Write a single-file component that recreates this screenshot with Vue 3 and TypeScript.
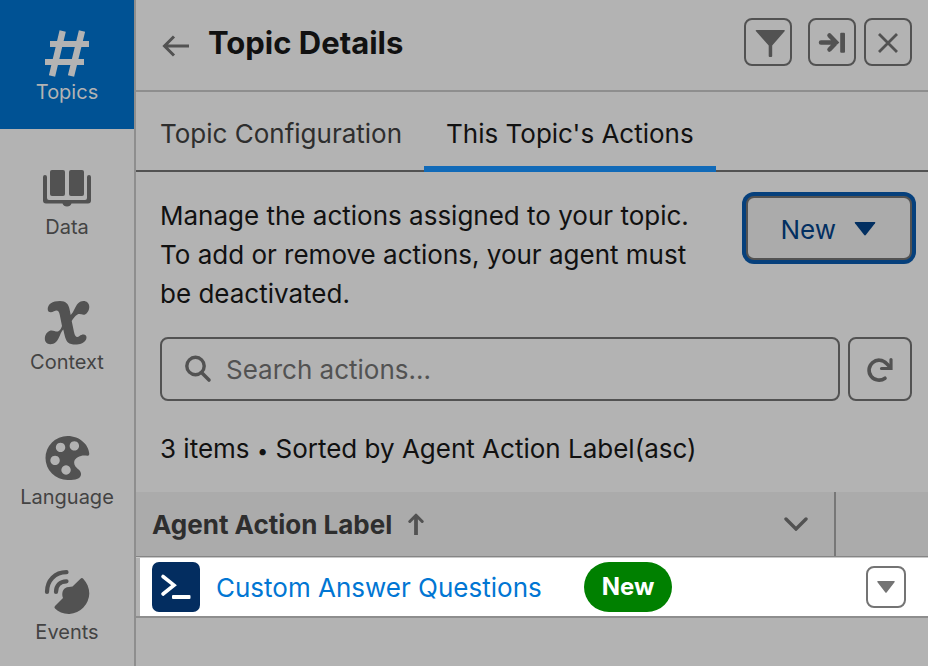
<script setup lang="ts">
import { ref } from 'vue'

interface NavItem {
  id: string
  label: string
}

const navItems: NavItem[] = [
  { id: 'topics', label: 'Topics' },
  { id: 'data', label: 'Data' },
  { id: 'context', label: 'Context' },
  { id: 'language', label: 'Language' },
  { id: 'events', label: 'Events' },
]
const tabs: string[] = ['Topic Configuration', "This Topic's Actions"]

const activeNav = ref('topics')
const activeTab = ref(1)
const query = ref('')
</script>

<template>
  <div class="app">
    <nav class="sidebar">
      <button
        v-for="item in navItems"
        :key="item.id"
        type="button"
        class="nav-item"
        :class="{ active: item.id === activeNav }"
        @click="activeNav = item.id"
      >
        <svg class="nav-icon" viewBox="0 0 48 48" aria-hidden="true">
          <g v-if="item.id === 'topics'" fill="none" stroke="currentColor" stroke-linejoin="round">
            <path d="M19.700 2L9 47M39 2L28 47" stroke-width="6.400" />
            <path d="M7 15H46M2 33H41" stroke-width="5.800" />
          </g>
          <g v-else-if="item.id === 'data'" fill="currentColor">
            <rect x="7" y="6" width="15" height="26" rx="2" />
            <rect x="26" y="6" width="15" height="26" rx="2" />
            <path d="M0 13q0-2 2-2t2 2v21q0 2 2 2h36q2 0 2-2V13q0-2 2-2t2 2v23.500q0 3-3 3H28.500q-1 3-4.500 3t-4.500-3H3q-3 0-3-3z" />
          </g>
          <path
            v-else-if="item.id === 'context'"
            fill="currentColor"
            d="M4.700 10C5 5 9 2 17 2C23 2 25.500 5 26.500 10L27.700 16C31 12.500 31.500 9 34 5.500C37 1.500 42 1 44.500 3.500C47.500 6.500 46.500 11.500 43.500 14.500C40.500 17.500 37.500 14 34.500 15.500C32 17 30 19.500 28.700 22L31 33C32 38 34 39 36.500 37C39 35 42 35 43.200 37C44.500 40 41.500 43.500 38.500 44.500C34.500 46 28 46 25 43.500C22.500 41 21.500 36 20.300 30.500C17 33.500 17 39 13 43C9.500 46.300 4 46 2.200 42C1 37.500 3 33 7.500 31.500C10.500 31 12.500 33 15 32.500C17 31.500 18.500 29 19 27L16.800 16C16 11.500 14 10.500 11 12.200C7.500 14.500 4.500 13 4.700 10Z"
          />
          <path
            v-else-if="item.id === 'language'"
            fill="currentColor"
            fill-rule="evenodd"
            d="M24.500 2C37 2 46 11 46.300 20Q46.300 22 44.500 21.800C42 21.500 40 21.300 38 22C33 23.500 31 26 31.200 29C31.500 33 35 34.500 37 37C39 40 38 43.500 34.500 44.700C31 46 27 46.200 24.500 46A22 22 0 0 1 24.500 2ZM17.500 8.700a4.700 4.700 0 1 0 .1 0zM31.300 7.200a4.700 4.700 0 1 0 .1 0zM12 21.700a4.700 4.700 0 1 0 .1 0zM23 31.300a4.700 4.700 0 1 0 .1 0z"
          />
          <g v-else fill="currentColor">
            <path
              d="M4 23C4 11.500 12 3.200 23.500 3.200M13 23C13 16.500 17 12.300 23.500 12.300"
              fill="none"
              stroke="currentColor"
              stroke-width="4.200"
              stroke-linecap="round"
            />
            <path d="M37.500 9.700q1.500-1.200 2.700.1C44 14 46.300 19 46.300 24.500A21 21 0 0 1 26.500 45C20.500 45.200 15.500 43 12 39.500q-1.200-1.300 0-2.500l8-8C18.500 25 19.500 21 22 19.200C24.500 17.600 27.500 18 29.500 17.500z" />
          </g>
        </svg>
        <span class="nav-label">{{ item.label }}</span>
      </button>
    </nav>

    <main class="panel">
      <header class="panel-header">
        <button type="button" class="back" aria-label="Back">
          <svg width="28" height="24" viewBox="0 0 28 24" fill="none" stroke="currentColor" stroke-width="3" aria-hidden="true">
            <path d="M27 12H3M12 2.500L2.500 12L12 21.500" />
          </svg>
        </button>
        <h1 class="title">Topic Details</h1>
        <button type="button" class="icon-button spaced" aria-label="Filter">
          <svg width="34" height="30" viewBox="0 0 34 30" fill="currentColor" aria-hidden="true">
            <path d="M5.500 3H33q1.500 0 .6 1.200L21.200 18.500V29q0 1-1 1h-1.500q-1 0-1-1V18.500L5 4.200Q4 3 5.500 3z" />
          </svg>
        </button>
        <button type="button" class="icon-button" aria-label="Collapse panel">
          <svg width="28" height="28" viewBox="0 0 28 28" aria-hidden="true">
            <path d="M3 14.500H18M11.500 7.500L18.200 14.500L11.500 21.500" fill="none" stroke="currentColor" stroke-width="4.500" stroke-linecap="round" />
            <rect x="22.200" y="4.800" width="4.800" height="20" rx="1" fill="currentColor" />
          </svg>
        </button>
        <button type="button" class="icon-button" aria-label="Close">
          <svg width="24" height="24" viewBox="0 0 24 24" fill="none" stroke="currentColor" stroke-width="2.800" aria-hidden="true">
            <path d="M3 4L21 22M21 4L3 22" />
          </svg>
        </button>
      </header>

      <div class="tabs" role="tablist">
        <button
          v-for="(tab, index) in tabs"
          :key="tab"
          type="button"
          role="tab"
          class="tab"
          :class="{ selected: index === activeTab }"
          :aria-selected="index === activeTab"
          @click="activeTab = index"
        >
          {{ tab }}
        </button>
      </div>

      <section class="intro">
        <p class="intro-text">
          Manage the actions assigned to your topic. To add or remove actions, your agent must be deactivated.
        </p>
        <button type="button" class="new-button">
          New
          <svg width="22" height="14" viewBox="0 0 22 14" fill="currentColor" aria-hidden="true">
            <path d="M1.500 0H20.500Q22 0 21 1.300L12 12.800Q11 14 10 12.800L1 1.300Q0 0 1.500 0z" />
          </svg>
        </button>
      </section>

      <div class="search-row">
        <label class="search">
          <svg width="28" height="28" viewBox="0 0 28 28" fill="none" stroke="currentColor" aria-hidden="true">
            <circle cx="11.500" cy="11" r="8.700" stroke-width="3.400" />
            <path d="M17.500 17.500L25 25" stroke-width="3.600" stroke-linecap="round" />
          </svg>
          <input v-model="query" type="text" class="search-input" placeholder="Search actions..." aria-label="Search actions" />
        </label>
        <button type="button" class="refresh" aria-label="Refresh">
          <svg width="28" height="28" viewBox="0 0 28 28" fill="none" stroke="currentColor" stroke-linecap="round" aria-hidden="true">
            <path d="M19 23.200A10 10 0 1 1 20.500 8.500L24 12" stroke-width="3.600" />
            <path d="M25 4.500V13.500H15.500" stroke-width="3.200" />
          </svg>
        </button>
      </div>

      <p class="summary">3 items <span class="dot">•</span> Sorted by Agent Action Label(asc)</p>

      <table class="actions">
        <thead>
          <tr>
            <th scope="col" class="label-head">
              <div class="head-cell">
                Agent Action Label
                <svg width="16" height="22" viewBox="0 0 16 22" fill="none" stroke="currentColor" aria-hidden="true">
                  <path d="M8 22V3" stroke-width="3.800" />
                  <path d="M1.800 8.500L8 2.200L14.200 8.500" stroke-width="3" stroke-linecap="round" stroke-linejoin="round" />
                </svg>
                <button type="button" class="head-menu" aria-label="Column actions">
                  <svg width="24" height="14" viewBox="0 0 24 14" fill="none" stroke="currentColor" stroke-width="3.400" stroke-linecap="round" aria-hidden="true">
                    <path d="M2 2L12 12L22 2" />
                  </svg>
                </button>
              </div>
            </th>
            <th scope="col" class="menu-head" aria-label="Row actions"></th>
          </tr>
        </thead>
        <tbody>
          <tr>
            <td class="label-cell">
              <div class="action">
                <svg class="action-icon" viewBox="0 0 48 50" aria-hidden="true">
                  <rect width="48" height="50" rx="7" fill="#032d60" />
                  <path d="M11 14.500L22 23.200L11 32" fill="none" stroke="#fff" stroke-width="3.600" stroke-linecap="round" />
                  <rect x="20" y="33" width="18.500" height="4" rx="1" fill="#fff" />
                </svg>
                <a href="#" class="action-link">Custom Answer Questions</a>
                <span class="badge">New</span>
              </div>
            </td>
            <td class="menu-cell">
              <button type="button" class="row-menu" aria-label="Show actions">
                <svg width="18" height="12" viewBox="0 0 18 12" fill="currentColor" aria-hidden="true">
                  <path d="M1 0H17Q18.500 0 17.500 1.200L9.800 11.300Q9 12.300 8.200 11.300L.5 1.200Q-.5 0 1 0z" />
                </svg>
              </button>
            </td>
          </tr>
        </tbody>
      </table>
    </main>
  </div>
</template>

<style>
body {
  margin: 0;
  background: #b3b3b3;
}
</style>

<style scoped>
.app {
  display: flex;
  min-height: 100vh;
  background: #b3b3b3;
  color: #111;
  font-family: Inter, 'Liberation Sans', sans-serif;
  font-size: 26px;
}

button {
  margin: 0;
  padding: 0;
  border: 0;
  background: none;
  color: #525252;
  font: inherit;
}

button svg,
.search svg {
  display: block;
  flex: none;
}

.sidebar {
  display: flex;
  flex: 0 0 134px;
  flex-direction: column;
  gap: 6px;
  border-right: 2px solid #8e8e8e;
}

.nav-item {
  display: flex;
  flex-direction: column;
  align-items: center;
  gap: 3px;
  padding: 29px 0 25px;
}

.nav-item.active {
  background: #005294;
  color: #b3b3b3;
}

.nav-icon {
  width: 48px;
  height: 48px;
}

.nav-label {
  color: #434343;
  font-size: 20px;
  line-height: 24px;
}

.nav-item.active .nav-label {
  color: #b3b3b3;
}

.panel {
  flex: 1;
  min-width: 0;
}

.panel-header {
  display: flex;
  align-items: center;
  gap: 8px;
  padding: 18px 16px 24px 26px;
  border-bottom: 2px solid #8e8e8e;
}

.back {
  padding-top: 8px;
}

.title {
  flex: 1;
  margin: 0 0 0 10px;
  padding-top: 2px;
  font-size: 31px;
  font-weight: 700;
  line-height: 46px;
}

.icon-button {
  display: flex;
  box-sizing: border-box;
  align-items: center;
  justify-content: center;
  width: 48px;
  height: 48px;
  border: 2px solid #525252;
  border-radius: 8px;
}

.icon-button.spaced {
  margin-right: 8px;
}

.tabs {
  display: flex;
  height: 80px;
  padding-left: 2px;
  box-shadow: inset 0 -2px #525252;
}

.tab {
  padding: 8px 22px 0;
  border-bottom: 6px solid transparent;
  color: #2e2e2e;
}

.tab.selected {
  border-bottom-color: #116ab8;
  color: #111;
}

.intro {
  display: flex;
  align-items: flex-start;
  justify-content: space-between;
  gap: 24px;
  padding: 24px 16px 24px 24px;
}

.intro-text {
  max-width: 540px;
  margin: 0;
  line-height: 39px;
}

.new-button {
  display: flex;
  box-sizing: border-box;
  flex: none;
  align-items: center;
  gap: 18px;
  height: 64px;
  padding: 2px 34px 0 32px;
  border: 2px solid #525252;
  border-radius: 8px;
  background: #ababab;
  box-shadow: 0 0 0 4px #06407c;
  color: #022f61;
}

.search-row {
  display: flex;
  gap: 8px;
  padding: 0 16px 0 24px;
}

.search {
  display: flex;
  box-sizing: border-box;
  flex: 1;
  align-items: center;
  gap: 14px;
  height: 64px;
  padding: 0 22px;
  border: 2px solid #525252;
  border-radius: 8px;
  color: #525252;
}

.search-input {
  flex: 1;
  min-width: 0;
  padding: 0;
  border: 0;
  outline: 0;
  background: none;
  color: #111;
  font: inherit;
}

.search-input::placeholder {
  color: #525252;
  opacity: 1;
}

.refresh {
  display: flex;
  box-sizing: border-box;
  align-items: center;
  justify-content: center;
  width: 64px;
  height: 64px;
  border: 2px solid #525252;
  border-radius: 8px;
}

.summary {
  margin: 0;
  padding: 28px 24px 23px;
  line-height: 40px;
}

.dot {
  font-size: 20px;
  line-height: 20px;
}

.actions {
  width: 100%;
  border-spacing: 0;
  table-layout: fixed;
}

.actions th,
.actions td {
  padding: 0;
}

.actions th {
  height: 64px;
  border-bottom: 1px solid #858585;
  background: #ababab;
  color: #2e2e2e;
  font-weight: 700;
  text-align: left;
}

.label-head {
  box-shadow: inset -2px 0 #777;
}

.menu-head {
  width: 92px;
}

.head-cell {
  display: flex;
  align-items: center;
  gap: 16px;
  padding: 0 28px 0 16px;
}

.head-cell > svg {
  color: #525252;
}

.head-menu {
  margin-left: auto;
}

.actions td {
  height: 58px;
  border-top: 1px solid #c8c8c8;
  border-bottom: 2px solid #8e8e8e;
  background: #fff;
}

.label-cell {
  box-shadow: inset 4px 0 #b3b3b3;
}

.action {
  display: flex;
  align-items: center;
  padding-left: 16px;
}

.action-icon {
  width: 48px;
  height: 50px;
}

.action-link {
  margin: 0 42px 0 16px;
  color: #0176d3;
  text-decoration: none;
}

.badge {
  padding: 0 18px;
  border-radius: 25px;
  background: #008000;
  color: #fff;
  font-size: 24px;
  font-weight: 700;
  line-height: 50px;
}

.row-menu {
  display: flex;
  box-sizing: border-box;
  align-items: center;
  justify-content: center;
  width: 40px;
  height: 42px;
  margin-left: 30px;
  border: 2px solid #747474;
  border-radius: 8px;
  color: #747474;
}
</style>
